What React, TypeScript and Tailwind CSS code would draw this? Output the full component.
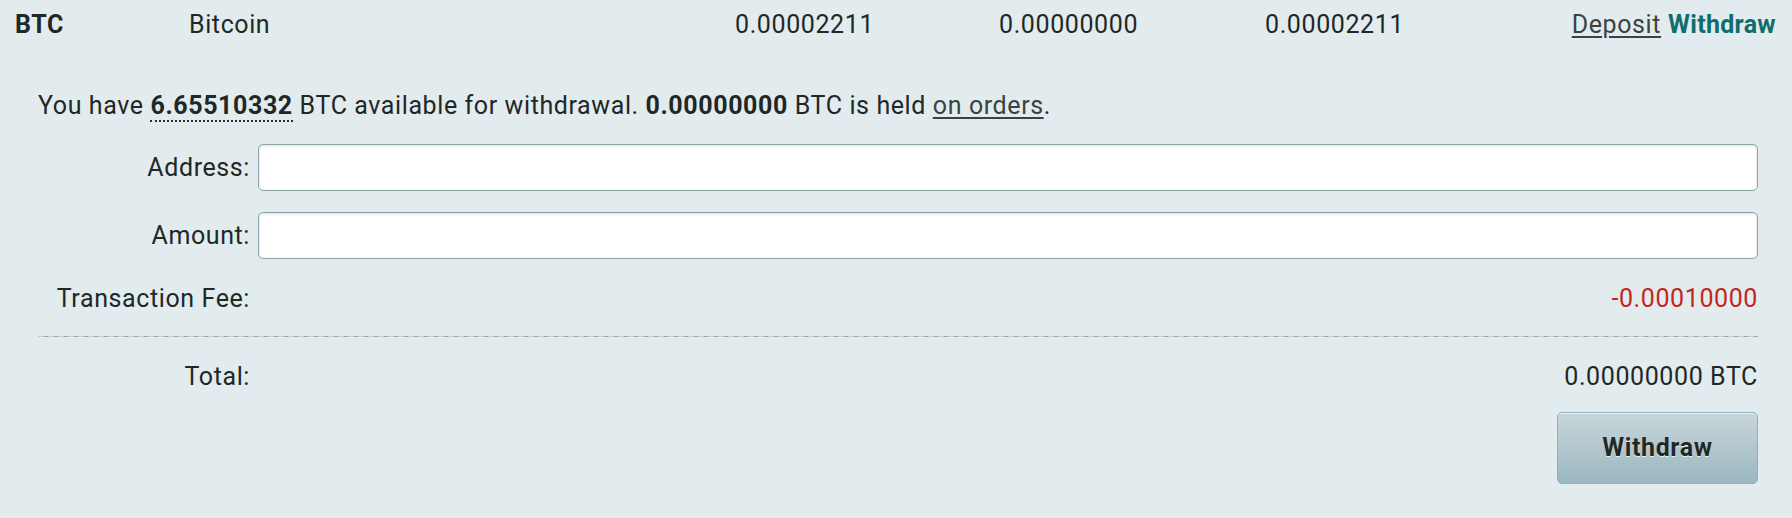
import React from "react";

const rowCells = [
  { text: "0.00002211", w: "w-[264px]" },
  { text: "0.00000000", w: "w-[266px]" },
  { text: "0.00002211", w: "w-[200px]" },
];

const FieldRow = ({ label, children }: { label: string; children: React.ReactNode }) => (
  <div className="grid grid-cols-[212px_1fr] gap-x-[8px] items-center">
    <div className="text-right leading-[30px]">{label}</div>
    {children}
  </div>
);

const TextInput = () => (
  <input
    type="text"
    className="h-[47px] w-full rounded-[5px] border-[1.5px] border-[#8aa5a7] bg-white px-3 shadow-[inset_0_1px_3px_rgba(0,0,0,0.14)] outline-none"
  />
);

export default function App() {
  return (
    <div
      className="h-[518px] w-full bg-[#e2ebed] text-[25px] tracking-[0.6px] text-[#1f2727]"
      style={{ fontFamily: "Roboto, 'Noto Sans', sans-serif" }}
    >
      {/* currency row */}
      <div className="flex items-center pl-[15px] pr-[16px] pt-[10px] leading-[30px]">
        <div className="w-[174px] font-bold">BTC</div>
        <div className="w-[546px]">Bitcoin</div>
        {rowCells.map((c, i) => (
          <div key={i} className={c.w}>
            {c.text}
          </div>
        ))}
        <div className="ml-auto flex gap-[7px]">
          <a href="#" className="text-[#3b4243] underline underline-offset-[3px]">
            Deposit
          </a>
          <a href="#" className="font-bold tracking-[0.3px] text-[#0f6d6e]">
            Withdraw
          </a>
        </div>
      </div>

      {/* withdraw panel */}
      <div className="flex flex-col pl-[38px] pr-[34px]">
        <p className="mt-[51px] leading-[30px]">
          You have{" "}
          <span className="border-b-2 border-dotted border-[#2a3030] font-bold">6.65510332</span> BTC
          available for withdrawal. <span className="font-bold">0.00000000</span> BTC is held{" "}
          <a href="#" className="text-[#3b4243] underline underline-offset-[3px]">
            on orders
          </a>
          .
        </p>

        <div className="mt-[23px]">
          <FieldRow label="Address:">
            <TextInput />
          </FieldRow>
        </div>
        <div className="mt-[21px]">
          <FieldRow label="Amount:">
            <TextInput />
          </FieldRow>
        </div>
        <div className="mt-[25px]">
          <FieldRow label="Transaction Fee:">
            <div className="text-right leading-[30px] text-[#c4261c]">-0.00010000</div>
          </FieldRow>
        </div>

        <div className="mt-[22px] h-px w-full bg-[repeating-linear-gradient(90deg,#c6cbcb_0_6px,#8ea8ab_6px_10px)]" />

        <div className="mt-[25px]">
          <FieldRow label="Total:">
            <div className="text-right leading-[30px]">0.00000000 BTC</div>
          </FieldRow>
        </div>

        <button
          type="button"
          className="mt-[20px] h-[72px] w-[201px] self-end rounded-[5px] border border-[#91b0bb] bg-gradient-to-b from-[#c9d6d9] to-[#9ab8c2] text-[25px] font-bold text-[#1f2727] shadow-[inset_0_1px_0_rgba(255,255,255,0.7)] [text-shadow:0_1px_0_rgba(255,255,255,0.8)]"
        >
          Withdraw
        </button>
      </div>
    </div>
  );
}
